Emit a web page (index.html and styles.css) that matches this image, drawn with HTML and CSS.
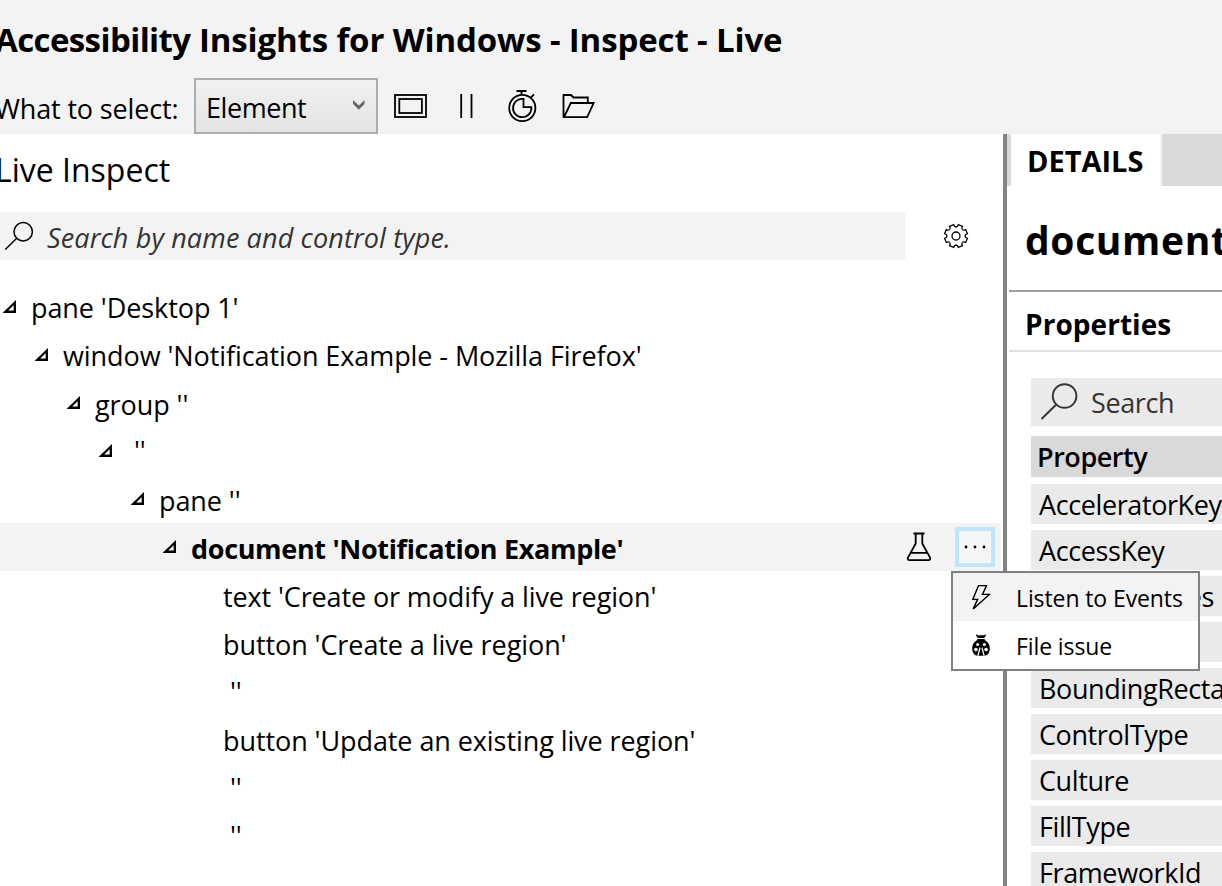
FILE: index.html
```
<!DOCTYPE html>
<html lang="en">
<head>
<meta charset="utf-8">
<title>Accessibility Insights for Windows - Inspect - Live</title>
<link rel="stylesheet" href="styles.css">
</head>
<body>
<svg class="defs" width="0" height="0">
  <defs>
    <path id="tooth" d="M0,-9 Q1.6,-9 2.3,-11.4 L6.44,-9.69 Q5.23,-7.5 6.36,-6.36"/>
    <path id="arrow" fill-rule="evenodd" d="M14 0V13H0.5ZM11.7 5.2L6.2 10.6H11.7Z"/>
  </defs>
</svg>
<div class="app">
  <header class="header">
    <h1 class="title"><span class="product">Accessibility</span> Insights for Windows - Inspect - Live</h1>
    <div class="toolbar">
      <span class="select-label">What to select:</span>
      <div class="select">
        <span>Element</span>
        <svg class="chevron" width="12" height="11" viewBox="0 0 12 11"><path d="M0 0L5.8 5.5L11.5 0V4L5.8 9.7L0 4Z" fill="#666"/></svg>
      </div>
      <svg class="tool" width="220" height="40" viewBox="386 86 220 40" fill="none" stroke="#000" stroke-width="1.8">
        <rect x="395" y="95" width="31" height="22"/>
        <rect x="399.3" y="99" width="22.6" height="14"/>
        <path d="M461.2 94V118M471.5 94V118"/>
        <circle cx="522.3" cy="108" r="13.1"/>
        <path d="M523.5 98.9A9.2 9.2 0 1 0 531.4 107.2H523.5Z"/>
        <path d="M516.5 91H526.5M521.5 91V95M530.5 97.8L534 94.3"/>
        <path d="M563.5 117V95H571L573.5 97.5H587.8V102.5M564 117.2H587.2L593.6 103H570.8Z"/>
      </svg>
    </div>
  </header>
  <main class="main">
    <section class="inspect">
      <h2 class="inspect-title">Live Inspect</h2>
      <div class="searchbar">
        <div class="search">
          <svg width="30" height="30" viewBox="4 221 30 30" fill="none" stroke="#000" stroke-width="1.5"><circle cx="23.2" cy="231.8" r="9.2"/><path d="M16.5 238.5L5.2 249.5"/></svg>
          <span>Search by name and control type.</span>
        </div>
        <svg class="gear" width="26" height="26" viewBox="-13 -13 26 26" fill="none" stroke="#000" stroke-width="1.3">
          <circle r="4"/>
          <use href="#tooth"/><use href="#tooth" transform="rotate(45)"/><use href="#tooth" transform="rotate(90)"/><use href="#tooth" transform="rotate(135)"/><use href="#tooth" transform="rotate(180)"/><use href="#tooth" transform="rotate(225)"/><use href="#tooth" transform="rotate(270)"/><use href="#tooth" transform="rotate(315)"/>
        </svg>
      </div>
      <div class="tree">
        <div class="node l0"><svg class="arrow" width="14" height="13"><use href="#arrow"/></svg><span>pane 'Desktop 1'</span></div>
        <div class="node l1"><svg class="arrow" width="14" height="13"><use href="#arrow"/></svg><span>window 'Notification Example - Mozilla Firefox'</span></div>
        <div class="node l2"><svg class="arrow" width="14" height="13"><use href="#arrow"/></svg><span>group ''</span></div>
        <div class="node l3"><svg class="arrow" width="14" height="13"><use href="#arrow"/></svg><span> ''</span></div>
        <div class="node l4"><svg class="arrow" width="14" height="13"><use href="#arrow"/></svg><span>pane ''</span></div>
        <div class="node l5 selected"><svg class="arrow" width="14" height="13"><use href="#arrow"/></svg><span>document 'Notification Example'</span>
          <svg class="flask" width="26" height="30" viewBox="0 0 26 30" fill="none" stroke="#000" stroke-width="1.8"><path d="M7.5 1.5H18.5M9.7 1.5V11.5L2 25.5Q1.2 28.2 3.6 28.2H22.4Q24.8 28.2 24 25.5L16.3 11.5V1.5M5.2 20.8H20.8"/></svg>
          <button class="more"><svg width="24" height="4" viewBox="0 0 24 4"><circle cx="3" cy="2" r="1.4"/><circle cx="12" cy="2" r="1.4"/><circle cx="21" cy="2" r="1.4"/></svg></button>
        </div>
        <div class="node l6"><span class="tight">text 'Create or modify a live region'</span></div>
        <div class="node l6"><span>button 'Create a live region'</span></div>
        <div class="node l6 unnamed"><span> ''</span></div>
        <div class="node l6"><span>button 'Update an existing live region'</span></div>
        <div class="node l6 unnamed"><span> ''</span></div>
        <div class="node l6 unnamed"><span> ''</span></div>
      </div>
    </section>
    <div class="splitter"></div>
    <section class="details">
      <div class="tabs"><div class="tab">DETAILS</div></div>
      <h2 class="element-name">document</h2>
      <h3 class="section-title">Properties</h3>
      <div class="props">
        <div class="prop-search">
          <svg width="40" height="38" viewBox="1040 383 40 38" fill="none" stroke="#333" stroke-width="1.9"><circle cx="1064.6" cy="396" r="11.8"/><path d="M1056.3 404.5L1041.5 419"/></svg>
          <span>Search</span>
        </div>
        <div class="prop-head">Property</div>
        <div class="prop">AcceleratorKey</div>
        <div class="prop">AccessKey</div>
        <div class="prop">AriaProperties</div>
        <div class="prop"></div>
        <div class="prop">BoundingRectangle</div>
        <div class="prop">ControlType</div>
        <div class="prop">Culture</div>
        <div class="prop">FillType</div>
        <div class="prop">FrameworkId</div>
      </div>
    </section>
  </main>
  <div class="menu">
    <div class="item active">
      <svg width="24" height="28" viewBox="0 0 24 28" fill="none" stroke="#000" stroke-width="1.4"><path d="M9.5 2.6H17.5L13.5 11.4H20.3L4.2 25.9L8.7 16.4H3.8Z"/></svg>
      <span>Listen to Events</span>
    </div>
    <div class="item">
      <svg width="24" height="28" viewBox="0 0 24 28">
        <path d="M7.2 3.3L9 4.3H15L16.8 3.3V4.8L15.3 7H8.7L7.2 4.8Z"/>
        <path d="M8.6 8H15.4L16.4 9.4Q20.8 12 20.8 17.2Q20.8 21.8 18 24L15.8 24.8H8.2L6 24Q3.2 21.8 3.2 17.2Q3.2 12 7.6 9.4Z"/>
        <g fill="#fff"><circle cx="8.6" cy="13.6" r="1.5"/><circle cx="15.4" cy="13.6" r="1.5"/><circle cx="6.9" cy="18.6" r="1.8"/><circle cx="17.1" cy="18.6" r="1.8"/><path d="M10.9 15.8L11.5 17.5L9.6 24.8H8.2L10 18ZM13.1 15.8L12.5 17.5L14.4 24.8H15.8L14 18Z"/></g>
      </svg>
      <span>File issue</span>
    </div>
  </div>
</div>
</body>
</html>
```
FILE: styles.css
```
* { box-sizing: border-box; }
html, body { margin: 0; height: 100%; overflow: hidden; }
body { font: 27px "Open Sans", "Noto Sans", sans-serif; color: #000; background: #fff; }
h1, h2, h3 { margin: 0; }
svg { display: block; flex: none; }
.defs { position: absolute; }
.app { position: relative; display: flex; flex-direction: column; width: 1222px; height: 886px; overflow: hidden; white-space: nowrap; }

.header { flex: none; height: 134px; background: #f3f3f3; }
.title { height: 78px; line-height: 80px; margin-left: -5px; font-size: 33px; font-weight: 700; letter-spacing: -0.13px; }
.product { letter-spacing: -0.6px; }
.toolbar { display: flex; align-items: center; height: 56px; }
.select-label { width: 199px; margin-left: -5px; padding-top: 4px; letter-spacing: -0.15px; line-height: 53px; }
.select { display: flex; justify-content: space-between; width: 184px; height: 56px; padding: 2px 11px 0 10px; border: 2px solid #acacac; background: linear-gradient(#f0f0f0, #e4e4e4); letter-spacing: -0.45px; line-height: 52px; }
.chevron { margin-top: 18px; }
.tool { margin-left: 8px; }

.main { display: flex; flex: 1; min-height: 0; }
.inspect { width: 1003px; }
.inspect-title { height: 78px; padding-top: 1px; margin-left: -5px; font-size: 32px; font-weight: 400; line-height: 70px; }
.searchbar { display: flex; align-items: center; height: 48px; }
.search { display: flex; align-items: center; width: 905px; height: 48px; padding-left: 4px; background: #f3f3f3; color: #333; font-style: italic; letter-spacing: 0.13px; }
.search span { margin: 4px 0 0 13px; line-height: 46px; }
.gear { margin-left: 38px; }
.tree { padding-top: 23px; }
.node { display: flex; width: 1001px; height: 48px; line-height: 52px; white-space: pre; letter-spacing: -0.08px; }
.node .arrow { width: 14px; margin: 17px 15px 0 0; }
.tight { letter-spacing: -0.12px; }
.unnamed { line-height: 50px; }
.l0 { padding-left: 2px; line-height: 50px; }
.l1 { padding-left: 34px; line-height: 50px; }
.l2 { padding-left: 66px; line-height: 51px; }
.l3 { padding-left: 98px; line-height: 48px; }
.l4 { padding-left: 130px; }
.l5 { padding-left: 162px; }
.l6 { padding-left: 223px; }
.selected { background: #f3f3f3; font-weight: 700; letter-spacing: -0.33px; white-space: nowrap; padding-right: 6px; }
.flask { margin: 9px 23px 0 auto; }
.more { display: flex; align-items: center; justify-content: center; flex: none; width: 40px; height: 40px; margin-top: 4px; padding: 0; border: 4px solid #bee6fd; background: #f6f6f6; }

.splitter { width: 4px; background: #838383; }
.details { width: 215px; overflow: hidden; }
.tabs { height: 52px; padding-left: 4px; background: #d9d9d9; }
.tab { width: 151px; height: 52px; padding-left: 16px; border-right: 2px solid #f3f3f3; background: #fff; font-size: 29px; font-weight: 700; line-height: 53px; }
.element-name { height: 106px; margin-left: 2px; padding-left: 16px; border-bottom: 2px solid #a0a0a0; font-size: 39px; font-weight: 700; line-height: 107px; letter-spacing: 0.65px; }
.section-title { height: 60px; margin-left: 2px; padding: 3px 0 0 16px; border-bottom: 2px solid #e0e0e0; font-size: 28px; font-weight: 700; line-height: 59px; letter-spacing: 0.05px; }
.props { padding: 26px 0 0 24px; letter-spacing: -0.4px; }
.prop-search { display: flex; align-items: center; height: 48px; margin-bottom: 10px; padding-left: 9px; background: #eaeaea; color: #333; }
.prop-search span { margin-left: 11px; }
.prop-head { height: 41px; margin-bottom: 7px; padding-left: 6px; background: #d9d9d9; font-weight: 600; line-height: 41px; letter-spacing: -0.45px; }
.prop { height: 40px; margin-bottom: 6px; padding-left: 8px; background: #eaeaea; line-height: 41px; }

.menu { position: absolute; left: 951px; top: 571px; width: 249px; border: 2px solid #808080; background: #fff; font-size: 23px; }
.item { display: flex; align-items: center; height: 48px; padding-left: 16px; line-height: 48px; letter-spacing: -0.1px; }
.item span { margin: 2px 0 0 23px; }
.active { background: #f3f3f3; }
```
